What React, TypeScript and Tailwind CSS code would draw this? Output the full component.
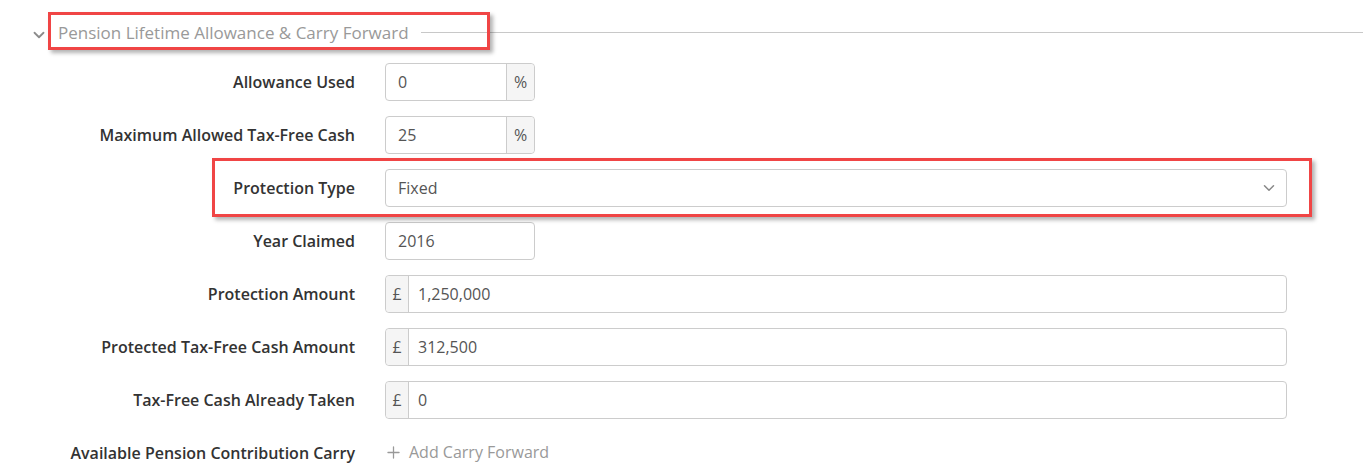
import { ChevronDown, Plus } from "lucide-react";

const font = { fontFamily: '"Open Sans", "Noto Sans", sans-serif' };

function Label({ children }: { children: React.ReactNode }) {
  return (
    <div className="ml-[55px] w-[300px] shrink-0 pt-[7px] text-right text-[16px] leading-[24px] font-semibold text-[#333]">
      {children}
    </div>
  );
}

function Row({ label, children }: { label: string; children: React.ReactNode }) {
  return (
    <div className="flex items-start gap-[30px]">
      <Label>{label}</Label>
      <div className="min-w-0">{children}</div>
    </div>
  );
}

function PercentInput({ value }: { value: string }) {
  return (
    <div className="flex h-[38px] w-[150px] rounded-[4px] border border-[#ccc] text-[16px] text-[#555]">
      <div className="flex flex-1 items-center px-[12px]">{value}</div>
      <div className="flex w-[28px] items-center justify-center rounded-r-[4px] border-l border-[#ccc] bg-[#f5f5f5]">%</div>
    </div>
  );
}

function MoneyInput({ value }: { value: string }) {
  return (
    <div className="flex h-[38px] w-[902px] rounded-[4px] border border-[#ccc] text-[16px] text-[#555]">
      <div className="flex w-[23px] items-center justify-center rounded-l-[4px] border-r border-[#ccc] bg-[#f5f5f5]">£</div>
      <div className="flex flex-1 items-center px-[9px]">{value}</div>
    </div>
  );
}

export default function App() {
  return (
    <div className="relative h-screen overflow-hidden bg-white" style={font}>
      <div className="flex h-[66px] items-start pt-[21px]">
        <ChevronDown className="ml-[30px] mt-[5px] size-[18px] text-[#8c8c8c]" strokeWidth={2.4} />
        <span className="ml-[10px] text-[17px] leading-[24px] text-[#999]">Pension Lifetime Allowance &amp; Carry Forward</span>
        <div className="ml-[12px] mt-[11px] h-px flex-1 bg-[#c8c8c8]" />
      </div>

      <div className="-mt-[3px] flex flex-col gap-[15px]">
        <Row label="Allowance Used">
          <PercentInput value="0" />
        </Row>
        <Row label="Maximum Allowed Tax-Free Cash">
          <PercentInput value="25" />
        </Row>
        <Row label="Protection Type">
          <div className="flex h-[38px] w-[902px] items-center justify-between rounded-[4px] border border-[#ccc] pr-[8px] pl-[12px] text-[16px] text-[#555]">
            <span>Fixed</span>
            <ChevronDown className="size-[18px] text-[#888]" strokeWidth={2} />
          </div>
        </Row>
        <Row label="Year Claimed">
          <div className="flex h-[38px] w-[150px] items-center rounded-[4px] border border-[#ccc] px-[12px] text-[16px] text-[#555]">2016</div>
        </Row>
        <Row label="Protection Amount">
          <MoneyInput value="1,250,000" />
        </Row>
        <Row label="Protected Tax-Free Cash Amount">
          <MoneyInput value="312,500" />
        </Row>
        <Row label="Tax-Free Cash Already Taken">
          <MoneyInput value="0" />
        </Row>
        <Row label="Available Pension Contribution Carry Forward">
          <div className="flex h-[36px] items-center gap-[6px] text-[16px] text-[#999]">
            <Plus className="-ml-px size-[19px]" strokeWidth={1.6} />
            <span>Add Carry Forward</span>
          </div>
        </Row>
      </div>

      <div className="absolute top-[12px] left-[48px] h-[38px] w-[442px] border-[3px] border-[#f04545] shadow-[3px_3px_4px_rgba(0,0,0,0.3)]" />
      <div className="absolute top-[158px] left-[212px] h-[59px] w-[1100px] border-[3px] border-[#f04545] shadow-[3px_3px_4px_rgba(0,0,0,0.3)]" />
    </div>
  );
}
